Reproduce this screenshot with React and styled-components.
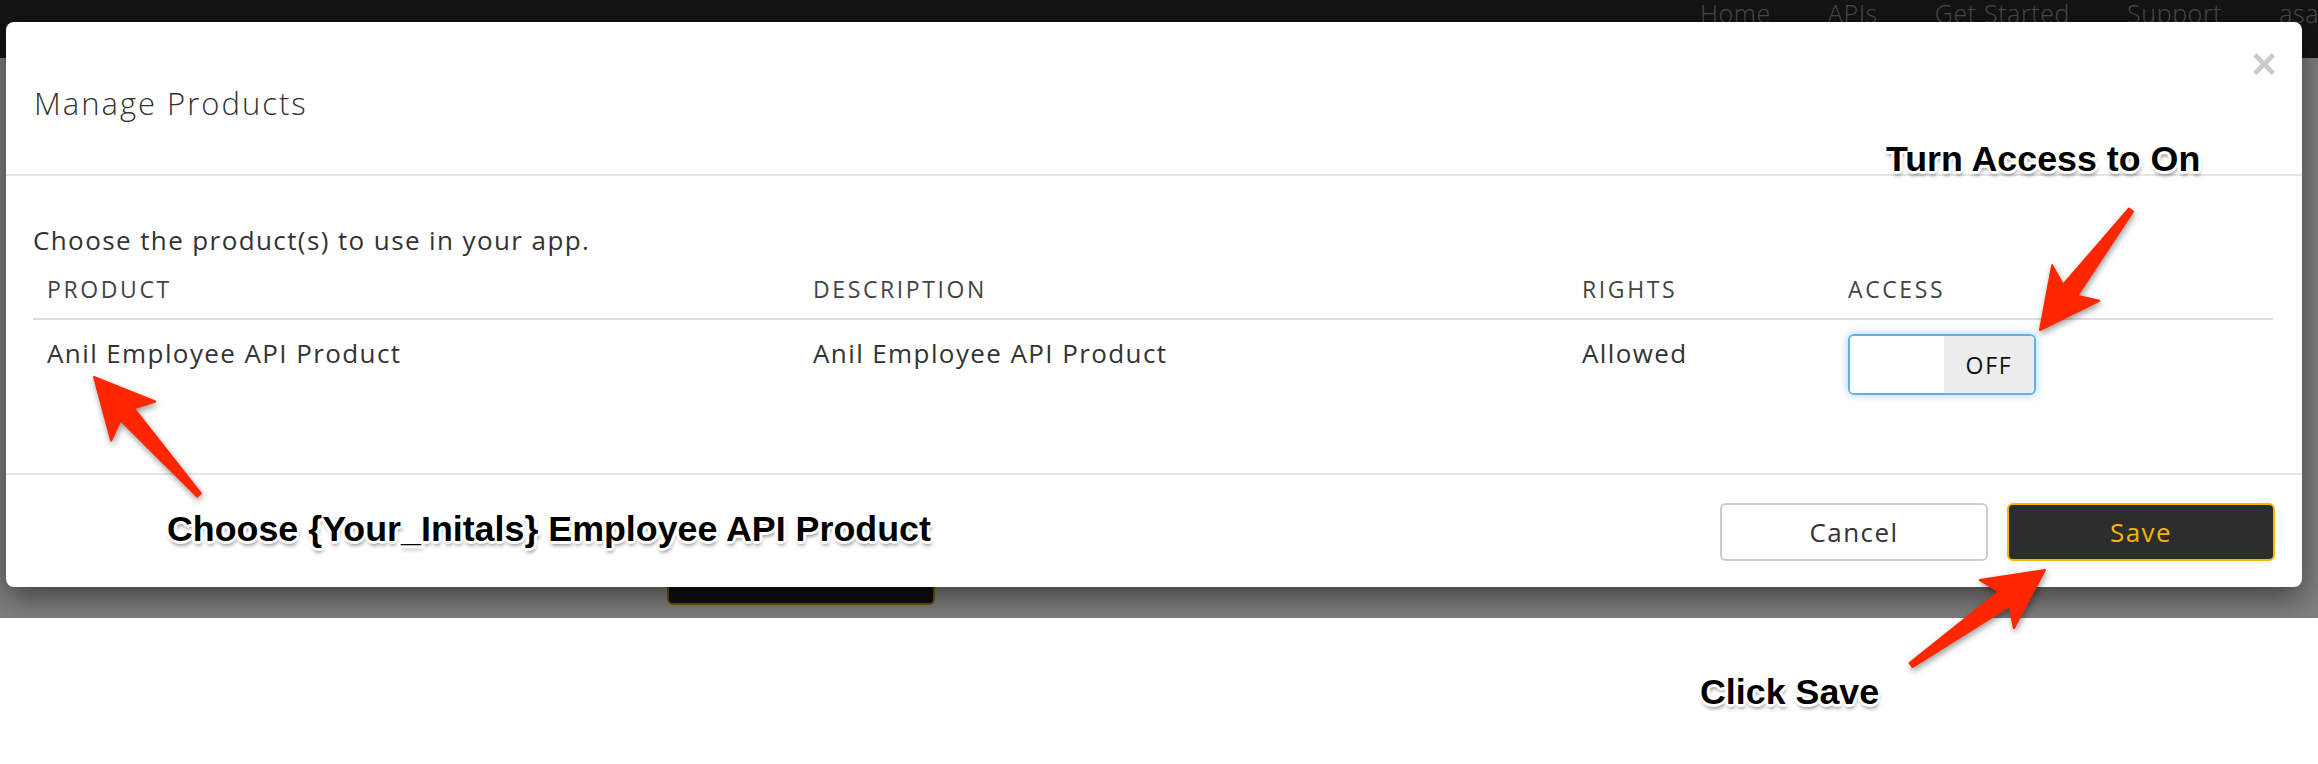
import React from "react";
import styled, { createGlobalStyle } from "styled-components";

const GlobalStyle = createGlobalStyle`
  body {
    margin: 0;
    background: #fff;
    font-family: "Open Sans", "Liberation Sans", sans-serif;
  }
`;

const navItems = ["Home", "APIs", "Get Started", "Support", "asaxena"];

const columns = [
  { key: "product", label: "Product" },
  { key: "description", label: "Description" },
  { key: "rights", label: "Rights" },
  { key: "access", label: "Access" },
];

const products = [
  {
    product: "Anil Employee API Product",
    description: "Anil Employee API Product",
    rights: "Allowed",
  },
];

// annotation arrows, tail -> tip
const arrows = [
  { tail: [199, 495], tip: [94, 377] },
  { tail: [2131, 210], tip: [2040, 330] },
  { tail: [1911, 665], tip: [2045, 570] },
];

const arrowPoints = ({ tail, tip }) => {
  const dx = tip[0] - tail[0];
  const dy = tip[1] - tail[1];
  const len = Math.hypot(dx, dy);
  const ux = dx / len;
  const uy = dy / len;
  const at = (d, w) => [tip[0] - ux * d - uy * w, tip[1] - uy * d + ux * w];
  const pts = [
    at(len, 2.5),
    at(50, 9),
    at(59, 29.5),
    tip,
    at(59, -29.5),
    at(50, -9),
    at(len, -2.5),
  ];
  return pts.map((p) => p.join(",")).join(" ");
};

const App = () => {
  return (
    <Stage>
      <GlobalStyle />
      <Page>
        <Navbar>
          <Brand />
          <NavLinks>
            {navItems.map((item) => (
              <NavLink key={item}>{item}</NavLink>
            ))}
          </NavLinks>
        </Navbar>
        <PageBody>
          <GhostButton />
        </PageBody>

        <Backdrop>
          <Modal>
            <ModalHeader>
              <Title>Manage Products</Title>
              <CloseButton>×</CloseButton>
            </ModalHeader>

            <ModalBody>
              <Intro>Choose the product(s) to use in your app.</Intro>
              <Table>
                <HeadRow>
                  {columns.map((col) => (
                    <HeadCell key={col.key}>{col.label}</HeadCell>
                  ))}
                </HeadRow>
                {products.map((p) => (
                  <Row key={p.product}>
                    <Cell>{p.product}</Cell>
                    <Cell>{p.description}</Cell>
                    <Cell>{p.rights}</Cell>
                    <Cell>
                      <Toggle>
                        <ToggleKnob />
                        <ToggleLabel>OFF</ToggleLabel>
                      </Toggle>
                    </Cell>
                  </Row>
                ))}
              </Table>
            </ModalBody>

            <ModalFooter>
              <Button>Cancel</Button>
              <Button primary>Save</Button>
            </ModalFooter>
          </Modal>
        </Backdrop>
      </Page>

      <ArrowLayer width="2318" height="764" viewBox="0 0 2318 764">
        <g>
          {arrows.map((a, i) => (
            <polygon
              key={i}
              points={arrowPoints(a)}
              fill="#ff2600"
              stroke="#ff2600"
              strokeWidth="2"
              strokeLinejoin="round"
            />
          ))}
        </g>
      </ArrowLayer>

      <Note top={142} left={1886}>Turn Access to On</Note>
      <Note top={512} left={167}>Choose {"{Your_Initals}"} Employee API Product</Note>
      <Note top={675} left={1700}>Click Save</Note>
    </Stage>
  );
};

const Stage = styled.div`
  position: relative;
  width: 2318px;
  height: 764px;
  overflow: hidden;
  background: #fff;
`;

const Page = styled.div`
  position: relative;
  height: 618px;
  background: #fff;
`;

const Navbar = styled.nav`
  display: flex;
  align-items: flex-start;
  height: 58px;
  background: #282828;
  overflow: hidden;
  white-space: nowrap;
`;

const Brand = styled.div`
  flex: 0 0 1700px;
`;

const NavLinks = styled.div`
  display: flex;
  gap: 57px;
`;

const NavLink = styled.a`
  font-size: 25px;
  font-weight: 300;
  line-height: 26px;
  letter-spacing: 0.6px;
  color: #979797;
`;

const PageBody = styled.div`
  padding: 489px 0 0 667px;
`;

const GhostButton = styled.div`
  width: 268px;
  height: 58px;
  box-sizing: border-box;
  background: #202020;
  border: 2px solid #d6a400;
  border-radius: 6px;
`;

const Backdrop = styled.div`
  position: absolute;
  inset: 0;
  background: rgba(0, 0, 0, 0.5);
  overflow: hidden;
`;

const Modal = styled.div`
  position: absolute;
  top: 22px;
  left: 6px;
  width: 2296px;
  background: #fff;
  border-radius: 8px;
  box-shadow: 0 10px 30px rgba(0, 0, 0, 0.5);
  color: #333;
`;

const ModalHeader = styled.div`
  display: flex;
  justify-content: space-between;
  align-items: flex-start;
  height: 152px;
  padding: 0 25px 0 28px;
  border-bottom: 2px solid #e5e5e5;
`;

const Title = styled.h4`
  margin: 61px 0 0;
  font-size: 31px;
  font-weight: 300;
  line-height: 40px;
  letter-spacing: 2px;
  color: #333;
`;

const CloseButton = styled.button`
  margin-top: 20px;
  padding: 0;
  border: none;
  background: none;
  font-family: "Liberation Sans", Arial, sans-serif;
  font-size: 44px;
  font-weight: 700;
  line-height: 44px;
  color: #000;
  opacity: 0.2;
`;

const ModalBody = styled.div`
  padding: 0 29px 64px 27px;
`;

const Intro = styled.p`
  margin: 47px 0 0;
  font-size: 26px;
  line-height: 34px;
  letter-spacing: 1.4px;
`;

const Table = styled.div`
  display: grid;
  grid-template-columns: 766px 769px 266px 1fr;
`;

const HeadRow = styled.div`
  display: contents;
`;

const HeadCell = styled.div`
  padding: 17px 14px 14px;
  font-size: 23px;
  line-height: 30px;
  letter-spacing: 2.6px;
  text-transform: uppercase;
  color: #444;
  border-bottom: 2px solid #ddd;
`;

const Row = styled.div`
  display: contents;
`;

const Cell = styled.div`
  padding: 14px;
  font-size: 26px;
  line-height: 38px;
  letter-spacing: 1.4px;
`;

const Toggle = styled.div`
  display: flex;
  width: 188px;
  height: 61px;
  box-sizing: border-box;
  border: 2px solid #66afe9;
  border-radius: 6px;
  overflow: hidden;
  box-shadow: 0 0 8px rgba(102, 175, 233, 0.6);
`;

const ToggleKnob = styled.div`
  flex: 0 0 94px;
  background: #fff;
`;

const ToggleLabel = styled.div`
  flex: 1;
  display: flex;
  align-items: center;
  justify-content: center;
  background: #ededed;
  font-size: 23px;
  letter-spacing: 1.8px;
  color: #111;
`;

const ModalFooter = styled.div`
  display: flex;
  justify-content: flex-end;
  gap: 19px;
  padding: 28px 27px 26px;
  border-top: 2px solid #e5e5e5;
`;

const Button = styled.button`
  width: 268px;
  height: 58px;
  border-radius: 6px;
  border: 2px solid ${(p) => (p.primary ? "#f7b500" : "#ccc")};
  background: ${(p) => (p.primary ? "#2c2e2d" : "#fff")};
  color: ${(p) => (p.primary ? "#f7b500" : "#333")};
  font-family: "Open Sans", sans-serif;
  font-size: 26px;
  letter-spacing: 1.4px;
`;

const ArrowLayer = styled.svg`
  position: absolute;
  top: 0;
  left: 0;
  pointer-events: none;
  filter: drop-shadow(1px 3px 3px rgba(0, 0, 0, 0.4));
`;

const Note = styled.div`
  position: absolute;
  top: ${(p) => p.top}px;
  left: ${(p) => p.left}px;
  font-family: "Liberation Sans", Arial, sans-serif;
  font-size: 35.8px;
  font-weight: 700;
  line-height: 1;
  color: #000;
  white-space: nowrap;
  text-shadow: -2px -2px 0 #fff, 2px -2px 0 #fff, -2px 2px 0 #fff,
    2px 2px 0 #fff, 0 -3px 0 #fff, 0 3px 0 #fff, -3px 0 0 #fff, 3px 0 0 #fff,
    1px 4px 4px rgba(0, 0, 0, 0.55);
`;

export default App;
